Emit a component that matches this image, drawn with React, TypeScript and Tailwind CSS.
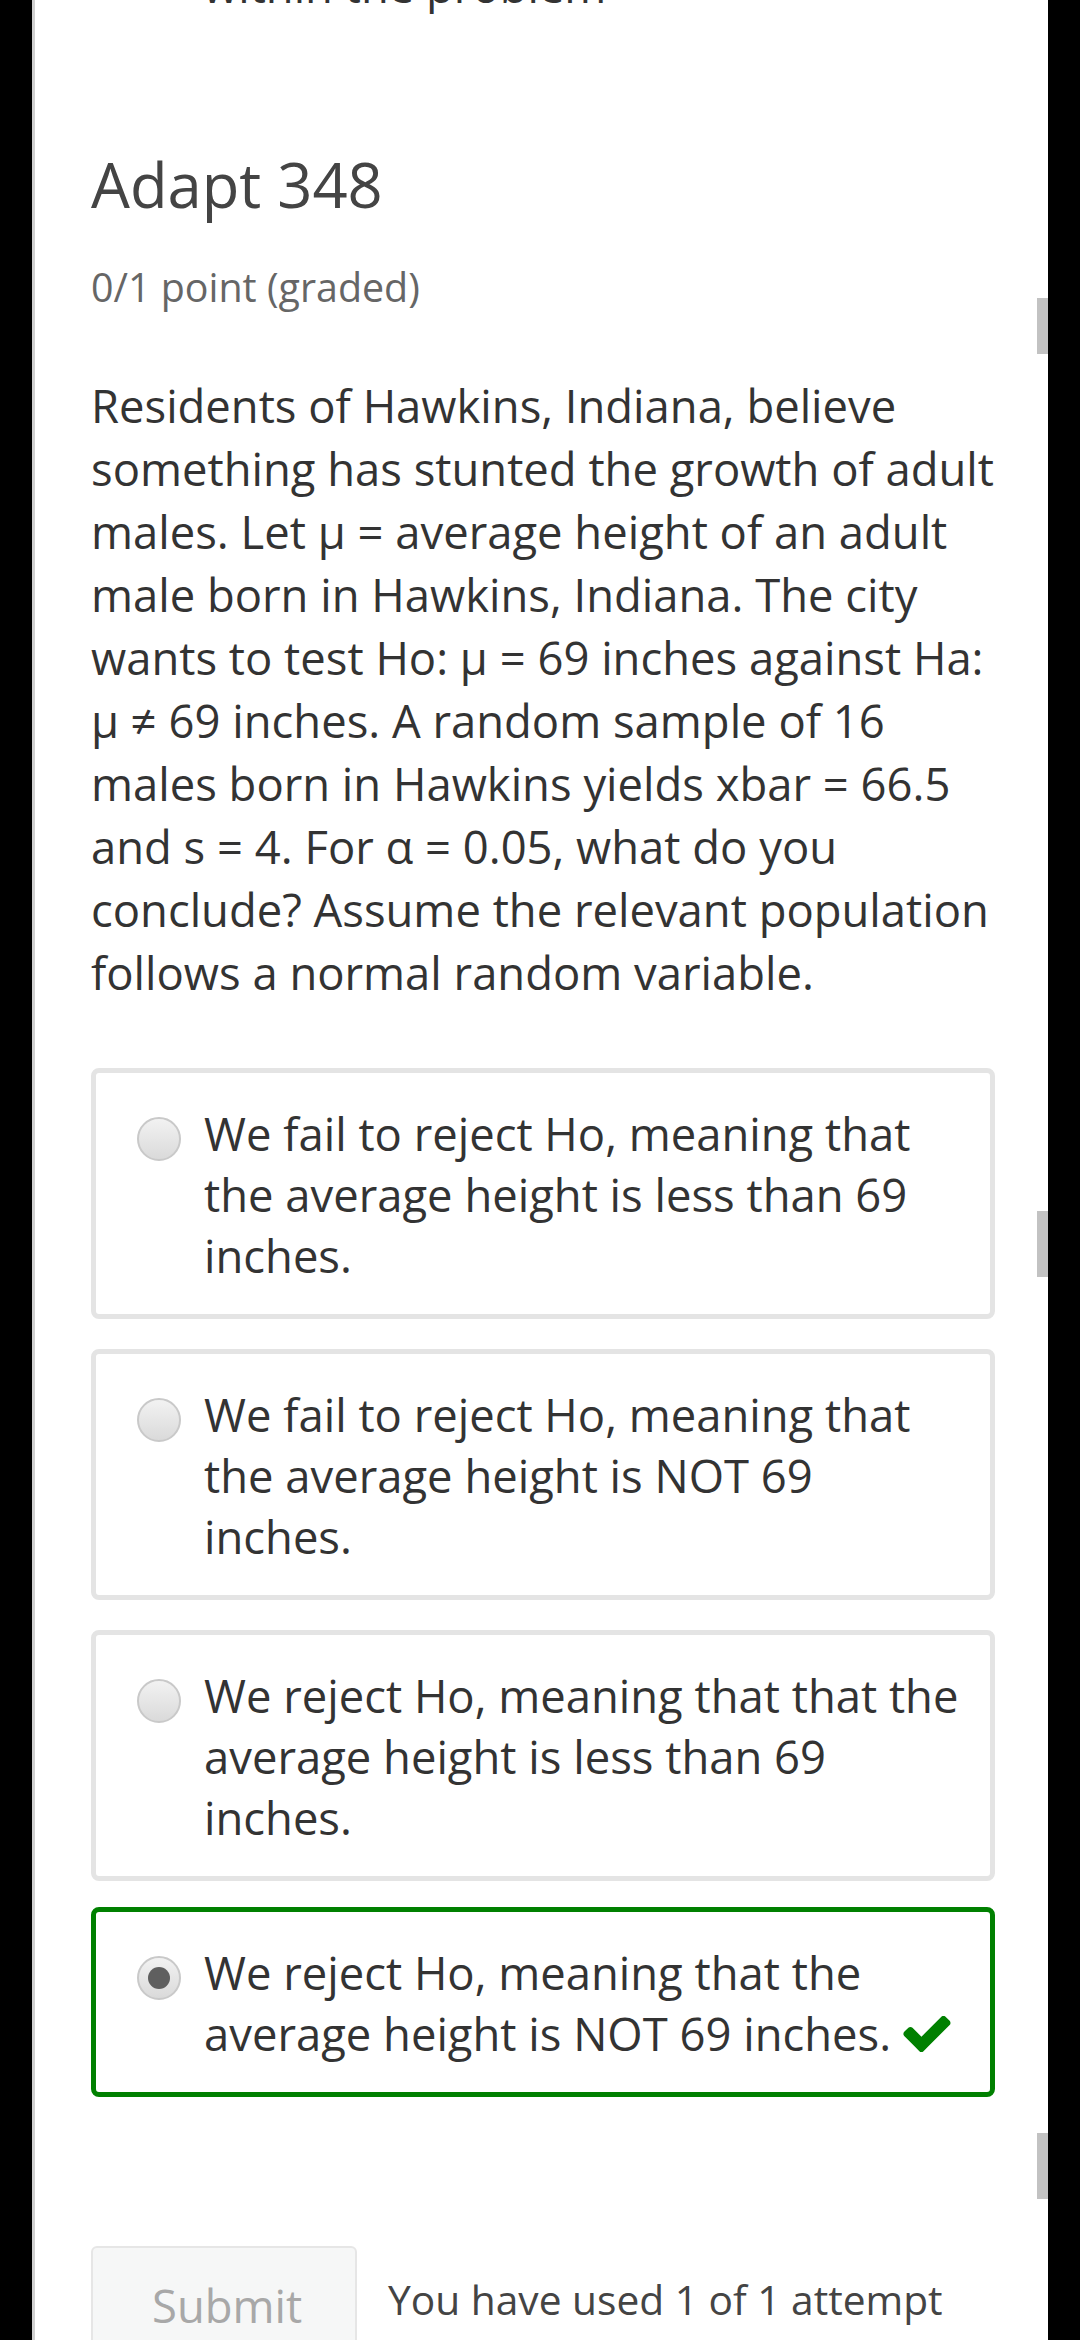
import React from "react";

const font = { fontFamily: '"Open Sans", "Noto Sans", sans-serif' };

function Radio({ checked }: { checked?: boolean }) {
  return (
    <div className="mt-[14px] flex h-[44px] w-[44px] shrink-0 items-center justify-center rounded-full border-2 border-[#c9c9c9] bg-linear-to-b from-[#f2f2f2] to-[#dadada]">
      {checked && <div className="h-[22px] w-[22px] rounded-full bg-[#5f5f5f]" />}
    </div>
  );
}

function Check() {
  return (
    <svg
      viewBox="125 338 1546 1184"
      className="ml-[12px] inline-block h-[36px] w-[48px] align-[-1px]"
      fill="#008000"
    >
      <path d="M1671 566q0 40-28 68l-724 724-136 136q-28 28-68 28t-68-28l-136-136-362-362q-28-28-28-68t28-68l136-136q28-28 68-28t68 28l294 295 656-657q28-28 68-28t68 28l136 136q28 28 28 68z" />
    </svg>
  );
}

function Option({
  text,
  checked,
  correct,
}: {
  text: string;
  checked?: boolean;
  correct?: boolean;
}) {
  return (
    <div
      className={
        correct
          ? "mt-[-4px] flex gap-[23px] rounded-[8px] border-[5px] border-[#008000] pb-[28px] pl-[41px] pr-[30px] pt-[30px]"
          : "flex gap-[23px] rounded-[8px] border-[5px] border-[#e4e4e4] pb-[28px] pl-[41px] pr-[30px] pt-[30px]"
      }
    >
      <Radio checked={checked} />
      <div className="text-[45.4px] leading-[61px] text-[#333333]">
        {text}
        {correct && <Check />}
      </div>
    </div>
  );
}

export default function App() {
  return (
    <div className="relative flex h-[2340px] w-[1080px] overflow-hidden bg-black" style={font}>
      <div className="w-[32px] shrink-0 bg-black" />
      <div className="flex w-[1016px] shrink-0 flex-col border-l-[3px] border-[#d0d0d0] bg-white pl-[56px] pr-[53px]">
        <div className="mt-[-46px] pl-[112px] text-[45.4px] leading-[63px] text-[#333333]">
          within the problem
        </div>
        <div className="mt-[80px] h-[3px] bg-[#dddddd]" />
        <h2 className="mt-[49px] text-[61.5px] leading-[76px] text-[#444444]">Adapt 348</h2>
        <div className="mt-[34px] text-[39.4px] leading-[63px] text-[#666666]">
          0/1 point (graded)
        </div>
        <p className="mt-[55px] text-[45.4px] leading-[63px] text-[#333333]">
          Residents of Hawkins, Indiana, believe something has stunted the growth of adult
          males. Let μ = average height of an adult male born in Hawkins, Indiana. The city
          wants to test Ho: μ = 69 inches against Ha: μ ≠ 69 inches. A random sample of 16
          males born in Hawkins yields xbar = 66.5 and s = 4. For α = 0.05, what do you
          conclude? Assume the relevant population follows a normal random variable.
        </p>
        <div className="mt-[64px] flex flex-col gap-[30px]">
          <Option text="We fail to reject Ho, meaning that the average height is less than 69 inches." />
          <Option text="We fail to reject Ho, meaning that the average height is NOT 69 inches." />
          <Option text="We reject Ho, meaning that that the average height is less than 69 inches." />
          <Option
            text="We reject Ho, meaning that the average height is NOT 69 inches."
            checked
            correct
          />
        </div>
        <div className="mt-[149px] flex items-start gap-[31px]">
          <div className="h-[140px] w-[266px] shrink-0 rounded-[6px] border-2 border-[#e6e6e6] bg-[#f6f7f7] pl-[59px] pt-[26px] text-[45.4px] leading-[63px] text-[#a8a8a8]">
            Submit
          </div>
          <div className="pt-[22px] text-[40.7px] leading-[63px] text-[#444444]">
            You have used 1 of 1 attempt
          </div>
        </div>
      </div>
      <div className="w-[32px] shrink-0 bg-black" />
      <div className="absolute left-[1037px] top-[298px] h-[56px] w-[11px] bg-[#c2c2c2]" />
      <div className="absolute left-[1037px] top-[1211px] h-[66px] w-[11px] bg-[#c2c2c2]" />
      <div className="absolute left-[1037px] top-[2133px] h-[66px] w-[11px] bg-[#c2c2c2]" />
    </div>
  );
}
